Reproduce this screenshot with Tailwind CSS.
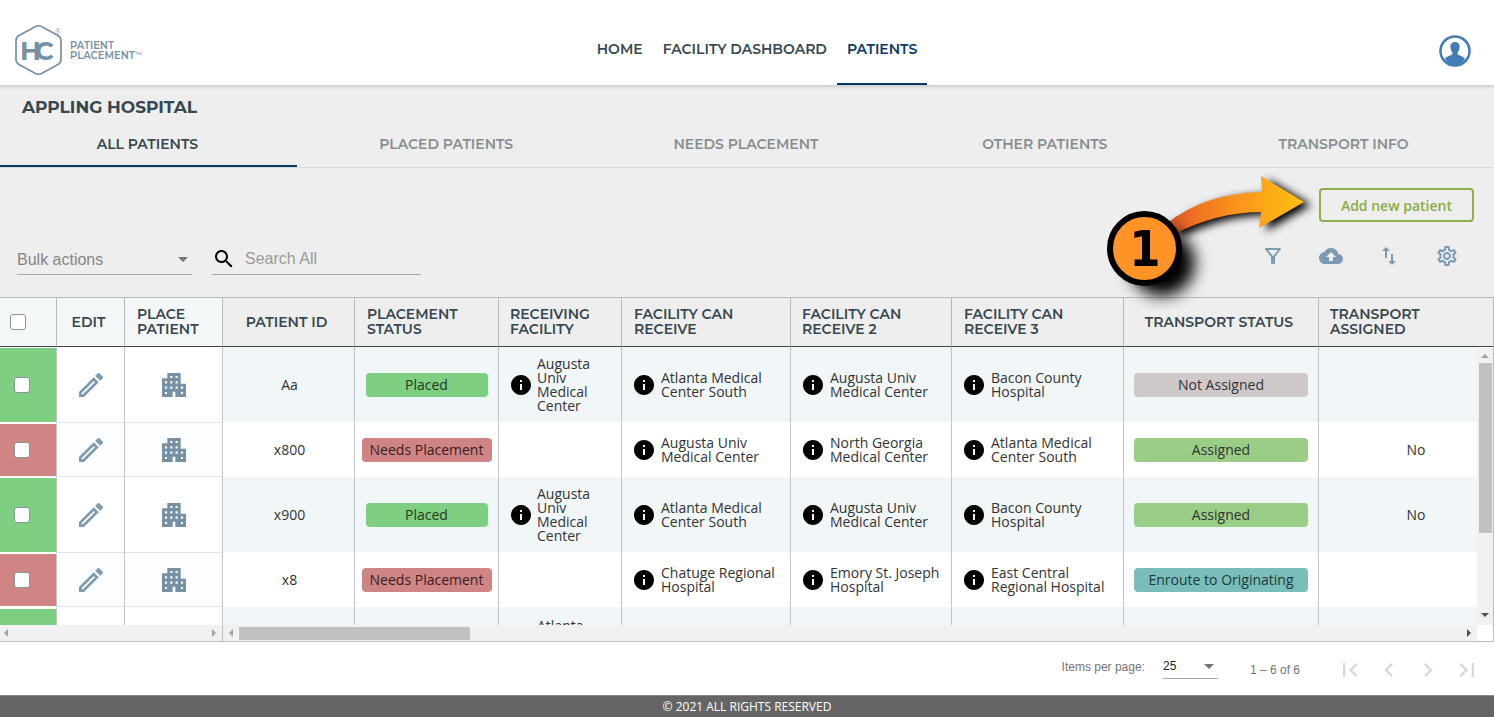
<!DOCTYPE html>
<html lang="en">
<head>
<meta charset="utf-8">
<meta name="viewport" content="width=device-width, initial-scale=1">
<title>Patient Placement</title>
<script src="https://cdn.jsdelivr.net/npm/@tailwindcss/browser@4"></script>
</head>
<body class="flex h-screen flex-col overflow-hidden bg-white font-['Open_Sans',sans-serif] text-sm text-[#333]">
<svg class="hidden" aria-hidden="true">
  <symbol id="pencil" viewBox="3 3 18 18"><path d="M14.06,9L15,9.94L5.92,19H5V18.08L14.06,9M17.66,3C17.41,3 17.15,3.1 16.96,3.29L15.13,5.12L18.88,8.87L20.71,7.04C21.1,6.65 21.1,6 20.71,5.63L18.37,3.29C18.17,3.09 17.92,3 17.66,3M14.06,6.19L3,17.25V21H6.75L17.81,9.94L14.06,6.19Z"/></symbol>
  <symbol id="building" viewBox="3 3 18 18"><path d="M17 11V3H7v4H3v14h8v-4h2v4h8V11h-4zM6.800 18.800H5.200v-1.600h1.600v1.600zm0-4H5.200v-1.600h1.600v1.600zm0-4H5.200V9.200h1.600v1.600zm4 4H9.200v-1.600h1.600v1.600zm0-4H9.200V9.200h1.600v1.600zm0-4H9.200V5.200h1.600v1.600zm4 8h-1.600v-1.600h1.600v1.600zm0-4h-1.600V9.200h1.600v1.600zm0-4h-1.600V5.200h1.600v1.600zm4 12h-1.600v-1.600h1.600v1.600zm0-4h-1.600v-1.600h1.600v1.600z"/></symbol>
  <symbol id="info" viewBox="2 2 20 20"><path d="M12 2C6.480 2 2 6.480 2 12s4.480 10 10 10 10-4.480 10-10S17.520 2 12 2zm1 15h-2v-6h2v6zm0-8h-2V7h2v2z"/></symbol>
</svg>

<header class="relative z-10 grid h-[85px] shrink-0 grid-cols-[1fr_auto_1fr] bg-white shadow-[0_1px_4px_rgba(0,0,0,0.22)]">
  <a href="#" aria-label="HC Patient Placement" class="flex items-start pt-5 pl-3">
    <svg width="140" height="60" viewBox="12 20 140 60" fill="#7690a5" font-family="Montserrat, Inter, sans-serif">
      <path d="M35.500 26.500Q38.500 25 41.500 26.500L58 35.500Q61 37.200 61 40.500V59.500Q61 62.800 58 64.500L41.500 73.500Q38.500 75 35.500 73.500L19 64.500Q16 62.800 16 59.500V40.500Q16 37.200 19 35.500Z" fill="none" stroke="#7690a5" stroke-width="1.700"/>
      <text x="20" y="60" font-size="26" font-weight="700">H</text>
      <text x="35" y="60" font-size="26" font-weight="700">C</text>
      <text x="55" y="34" font-size="7">®</text>
      <text x="70" y="49" font-size="10" font-weight="600">PATIENT</text>
      <text x="70" y="59" font-size="10" font-weight="600">PLACEMENT</text>
      <text x="135" y="57" font-size="7">™</text>
    </svg>
  </a>
  <nav class="ml-5 flex font-['Montserrat','Inter',sans-serif] text-sm font-semibold text-[#37474f]">
    <a href="#" class="flex items-center border-b-2 border-transparent px-[10px] pt-4 pb-px">HOME</a>
    <a href="#" class="flex items-center border-b-2 border-transparent px-[10px] pt-4 pb-px">FACILITY DASHBOARD</a>
    <a href="#" aria-current="page" class="flex items-center border-b-2 border-[#083865] px-[10px] pt-4 pb-px text-[#083865]">PATIENTS</a>
  </nav>
  <div class="flex items-start justify-end pt-[35px] pr-[23px]">
    <button aria-label="Account">
      <svg width="32" height="32" viewBox="0 0 32 32"><circle cx="16" cy="16" r="14.500" fill="#fff" stroke="#427cb6" stroke-width="2.500"/><path d="M16 7c3.200 0 4.800 2.200 4.600 5-.1 2.400-1 4.400-2 5.400v1.800c1.400 1.400 5.400 1.800 7.400 4.200C24 27.500 20 30 16 30S8 27.500 6 23.400c2-2.400 6-2.800 7.400-4.200v-1.800c-1-1-1.900-3-2-5.400C11.200 9.200 12.800 7 16 7Z" fill="#427cb6"/></svg>
    </button>
  </div>
</header>

<main class="flex min-h-0 flex-1 flex-col">
  <section class="shrink-0 bg-[#eee] pt-[10px] font-['Montserrat','Inter',sans-serif]">
    <h1 class="pl-[22px] text-[17px] leading-6 font-bold text-[#37474f]">APPLING HOSPITAL</h1>
    <div role="tablist" class="grid h-[49px] grid-cols-5 border-b border-[#dcdcdc] text-sm font-semibold text-[#868e93]">
      <button role="tab" aria-selected="true" class="mr-[2px] border-b-2 border-[#083865] pt-1 pr-[2px] text-[#37474f]">ALL PATIENTS</button>
      <button role="tab" aria-selected="false" class="border-b-2 border-transparent pt-1 pr-1">PLACED PATIENTS</button>
      <button role="tab" aria-selected="false" class="border-b-2 border-transparent pt-1 pr-[2px]">NEEDS PLACEMENT</button>
      <button role="tab" aria-selected="false" class="border-b-2 border-transparent pt-1 pr-[2px]">OTHER PATIENTS</button>
      <button role="tab" aria-selected="false" class="border-b-2 border-transparent pt-1 pr-[2px]">TRANSPORT INFO</button>
    </div>
  </section>

  <section class="relative flex h-[129px] shrink-0 flex-col bg-[#eee] pt-5">
    <div class="flex justify-end pr-5">
      <button class="h-[34px] rounded border-2 border-[#8cb04e] px-5 pt-px text-sm font-semibold text-[#87ad46]">Add new patient</button>
    </div>
    <div class="flex items-start justify-between pt-[22px] pr-[35px] pl-[17px] font-['Liberation_Sans',Arial,sans-serif] text-base">
      <div class="flex gap-5">
        <div class="grid w-[175px] items-center border-b border-[#a8a8a8]">
          <select aria-label="Bulk actions" class="col-start-1 row-start-1 h-[30px] w-full appearance-none bg-transparent pt-[2px] text-[#858585] outline-none"><option>Bulk actions</option></select>
          <svg class="pointer-events-none col-start-1 row-start-1 mr-1 justify-self-end" width="10" height="5"><path d="M0 0h10L5 5z" fill="#757575"/></svg>
        </div>
        <label class="flex h-[31px] w-[209px] items-center gap-[9px] border-b border-[#a8a8a8]">
          <svg class="shrink-0" width="24" height="24" viewBox="0 0 24 24"><path d="M15.500 14h-.79l-.28-.27C15.410 12.590 16 11.110 16 9.500 16 5.910 13.090 3 9.500 3S3 5.910 3 9.500 5.910 16 9.500 16c1.610 0 3.090-.59 4.230-1.570l.27.28v.79l5 4.990L20.490 19l-4.990-5zm-6 0C7.010 14 5 11.990 5 9.500S7.010 5 9.500 5 14 7.010 14 9.500 11.990 14 9.500 14z"/></svg>
          <input type="search" placeholder="Search All" aria-label="Search All" class="w-full min-w-0 bg-transparent outline-none placeholder:text-[#9b9b9b]">
        </label>
      </div>
      <div class="flex gap-[34px] fill-[#7c9ab0]">
        <button aria-label="Filter"><svg width="24" height="24" viewBox="0 0 24 24"><path d="M7 6h10l-5.010 6.300L7 6zm-2.750-.39C6.270 8.200 10 13 10 13v6c0 .55.45 1 1 1h2c.55 0 1-.45 1-1v-6s3.720-4.800 5.740-7.390A.998.998 0 0018.950 4H5.040c-.83 0-1.300.95-.79 1.610z"/></svg></button>
        <button aria-label="Upload"><svg width="24" height="24" viewBox="0 0 24 24"><path d="M19.350 10.040C18.670 6.590 15.640 4 12 4 9.110 4 6.600 5.640 5.350 8.040 2.340 8.360 0 10.910 0 14c0 3.310 2.690 6 6 6h13c2.760 0 5-2.240 5-5 0-2.640-2.050-4.780-4.650-4.960zM14 13v4h-4v-4H7l5-5 5 5h-3z"/></svg></button>
        <button aria-label="Sort"><svg width="24" height="24" viewBox="0 0 24 24"><path d="M9 3L5 6.990h3V14h2V6.990h3L9 3zm7 14.010V10h-2v7.010h-3L15 21l4-3.990h-3z"/></svg></button>
        <button aria-label="Settings"><svg width="24" height="24" viewBox="0 0 24 24"><path d="M19.43 12.98c.04-.32.07-.64.07-.98 0-.34-.03-.66-.07-.98l2.11-1.65c.19-.15.24-.42.12-.64l-2-3.46c-.09-.16-.26-.25-.44-.25-.06 0-.12.01-.17.03l-2.49 1c-.52-.4-1.08-.73-1.69-.98l-.38-2.65C14.46 2.18 14.25 2 14 2h-4c-.25 0-.46.18-.49.42l-.38 2.65c-.61.25-1.17.59-1.69.98l-2.49-1c-.06-.02-.12-.03-.18-.03-.17 0-.34.09-.43.25l-2 3.46c-.13.22-.07.49.12.64l2.11 1.65c-.04.32-.07.65-.07.98 0 .33.03.66.07.98l-2.11 1.65c-.19.15-.24.42-.12.64l2 3.46c.09.16.26.25.44.25.06 0 .12-.01.17-.03l2.49-1c.52.4 1.08.73 1.69.98l.38 2.65c.03.24.24.42.49.42h4c.25 0 .46-.18.49-.42l.38-2.65c.61-.25 1.17-.59 1.69-.98l2.49 1c.06.02.12.03.18.03.17 0 .34-.09.43-.25l2-3.46c.12-.22.07-.49-.12-.64l-2.110-1.650zm-1.980-1.710c.04.31.05.52.05.73 0 .21-.02.43-.05.73l-.14 1.130.89.7 1.080.84-.7 1.210-1.270-.51-1.040-.42-.9.68c-.43.32-.84.56-1.250.73l-1.060.43-.16 1.130-.2 1.350h-1.400l-.19-1.350-.16-1.130-1.060-.43c-.43-.18-.83-.41-1.230-.71l-.91-.7-1.060.43-1.270.51-.7-1.210 1.080-.84.89-.7-.14-1.130c-.03-.31-.05-.54-.05-.74s.02-.43.05-.73l.14-1.130-.89-.7-1.080-.84.7-1.210 1.270.51 1.040.42.9-.68c.43-.32.84-.56 1.250-.73l1.060-.43.16-1.130.2-1.350h1.390l.19 1.350.16 1.130 1.060.43c.43.18.83.41 1.230.71l.91.7 1.060-.43 1.270-.51.7 1.210-1.070.85-.89.7.14 1.130zM12 8c-2.210 0-4 1.790-4 4s1.790 4 4 4 4-1.790 4-4-1.790-4-4-4zm0 6c-1.100 0-2-.9-2-2s.9-2 2-2 2 .9 2 2-.9 2-2 2z"/></svg></button>
      </div>
    </div>

    <!-- Step 1 callout pointing at the button -->
    <svg class="pointer-events-none absolute top-0 right-[164px] z-20" width="230" height="142" viewBox="1100 168 230 142">
      <defs>
        <linearGradient id="flame" x1="1170" x2="1304" y1="0" y2="0" gradientUnits="userSpaceOnUse"><stop offset="0" stop-color="#d9532a"/><stop offset=".2" stop-color="#f0731f"/><stop offset=".5" stop-color="#fa941b"/><stop offset="1" stop-color="#ffc010"/></linearGradient>
        <filter id="soft" x="-50%" y="-50%" width="200%" height="200%"><feGaussianBlur stdDeviation="8"/></filter>
        <filter id="near" x="-20%" y="-40%" width="140%" height="180%"><feGaussianBlur stdDeviation="4"/></filter>
      </defs>
      <path transform="translate(7 3)" d="M1166 224Q1205 192 1262 192L1261 176L1304 202L1259 228L1261 212Q1218 212 1174 234Z" fill="#000" filter="url(#near)"/>
      <path d="M1166 224Q1205 193 1262 192L1261 176L1304 202L1259 228L1261 212Q1218 212 1174 234Z" fill="url(#flame)"/>
      <circle cx="1162" cy="263" r="33" filter="url(#soft)"/>
      <circle cx="1144.500" cy="248.500" r="34.500" fill="#ff9326" stroke="#000" stroke-width="6"/>
      <text x="1145" y="266" text-anchor="middle" font-family="DejaVu Sans Condensed, DejaVu Sans, sans-serif" font-weight="700" font-size="50">1</text>
    </svg>
  </section>

  <section class="flex min-h-0 flex-1 flex-col border-t border-r border-b border-[#b4bec2]">
    <div class="relative min-h-0 flex-1 overflow-hidden">
      <table class="w-full table-fixed border-separate border-spacing-0 text-sm leading-[14px]">
        <colgroup><col class="w-[57px]"><col class="w-[68px]"><col class="w-[98px]"><col class="w-[132px]"><col class="w-[144px]"><col class="w-[123px]"><col class="w-[169px]"><col class="w-[161px]"><col class="w-[172px]"><col class="w-[195px]"><col></colgroup>
        <thead class="bg-[#eee] font-['Montserrat','Inter',sans-serif] text-sm leading-[15px] text-[#37474f]">
          <tr class="h-[49px] text-left *:border-r *:border-b *:border-r-[#b5b9bb] *:border-b-[#444] *:py-0 *:font-semibold">
            <th class="bg-[#f4f7f7] pl-[10px]"><input type="checkbox" aria-label="Select all" class="block size-4 appearance-none rounded-[3px] border border-[#8a9499] bg-white"></th>
            <th class="bg-[#f4f7f7] pr-1 text-center">EDIT</th>
            <th class="bg-[#f4f7f7] pl-3">PLACE PATIENT</th>
            <th class="pr-1 text-center">PATIENT ID</th>
            <th class="pl-3">PLACEMENT STATUS</th>
            <th class="pl-[11px]">RECEIVING FACILITY</th>
            <th class="pr-6 pl-3">FACILITY CAN RECEIVE</th>
            <th class="pr-6 pl-[11px]">FACILITY CAN RECEIVE 2</th>
            <th class="pr-6 pl-3">FACILITY CAN RECEIVE 3</th>
            <th class="pr-1 text-center">TRANSPORT STATUS</th>
            <th class="border-r-0! pr-12 pl-[11px]">TRANSPORT ASSIGNED</th>
          </tr>
        </thead>
        <tbody>
          <tr class="h-[76px] bg-[#f1f7f8] *:border-r *:border-b *:border-r-[#bfc4c6] *:border-b-white *:py-0">
            <td class="border-t border-t-white bg-[#7fcf82] pl-[14px]"><input type="checkbox" aria-label="Select Aa" class="block size-4 appearance-none rounded-[3px] border border-[#8a9499] bg-white"></td>
            <td class="border-b-[#dfe3e5]! bg-white"><button aria-label="Edit Aa" class="mx-auto block fill-[#7c9ab0]"><svg width="24" height="24"><use href="#pencil"/></svg></button></td>
            <td class="border-b-[#dfe3e5]! bg-white"><button aria-label="Place Aa" class="mx-auto block fill-[#7690a5]"><svg width="24" height="24"><use href="#building"/></svg></button></td>
            <td class="pl-[2px] text-center">Aa</td>
            <td><div class="mx-auto flex h-6 w-[122px] items-center justify-center rounded bg-[#7fcf82] text-[#1d3a20]">Placed</div></td>
            <td class="pr-7 pl-3"><div class="flex items-center gap-[6px]"><svg class="shrink-0" width="20" height="20"><use href="#info"/></svg><span>Augusta Univ Medical Center</span></div></td>
            <td class="pl-3"><div class="flex items-center gap-[7px]"><svg class="shrink-0" width="20" height="20"><use href="#info"/></svg><span>Atlanta Medical Center South</span></div></td>
            <td class="pl-3"><div class="flex items-center gap-[7px]"><svg class="shrink-0" width="20" height="20"><use href="#info"/></svg><span>Augusta Univ Medical Center</span></div></td>
            <td class="pl-3"><div class="flex items-center gap-[7px]"><svg class="shrink-0" width="20" height="20"><use href="#info"/></svg><span>Bacon County Hospital</span></div></td>
            <td class="px-[10px]"><div class="flex h-6 items-center justify-center rounded bg-[#d0c9ca]">Not Assigned</div></td>
            <td class="border-r-0!"></td>
          </tr>
          <tr class="h-[54px] bg-white *:border-r *:border-b *:border-r-[#bfc4c6] *:border-b-white *:py-0">
            <td class="border-t border-t-white bg-[#ce8583] pl-[14px]"><input type="checkbox" aria-label="Select x800" class="block size-4 appearance-none rounded-[3px] border border-[#8a9499] bg-white"></td>
            <td class="border-b-[#dfe3e5]! bg-[#fbfdfe]"><button aria-label="Edit x800" class="mx-auto block fill-[#7c9ab0]"><svg width="24" height="24"><use href="#pencil"/></svg></button></td>
            <td class="border-b-[#dfe3e5]! bg-[#fbfdfe]"><button aria-label="Place x800" class="mx-auto block fill-[#7690a5]"><svg width="24" height="24"><use href="#building"/></svg></button></td>
            <td class="pl-[2px] text-center">x800</td>
            <td><div class="mx-auto flex h-6 w-[130px] items-center justify-center rounded bg-[#ce8583] text-[#3a1d1d]">Needs Placement</div></td>
            <td></td>
            <td class="pl-3"><div class="flex items-center gap-[7px]"><svg class="shrink-0" width="20" height="20"><use href="#info"/></svg><span>Augusta Univ Medical Center</span></div></td>
            <td class="pl-3"><div class="flex items-center gap-[7px]"><svg class="shrink-0" width="20" height="20"><use href="#info"/></svg><span>North Georgia Medical Center</span></div></td>
            <td class="pl-3"><div class="flex items-center gap-[7px]"><svg class="shrink-0" width="20" height="20"><use href="#info"/></svg><span>Atlanta Medical Center South</span></div></td>
            <td class="px-[10px]"><div class="flex h-6 items-center justify-center rounded bg-[#9acd86]">Assigned</div></td>
            <td class="border-r-0! pl-5 text-center">No</td>
          </tr>
          <tr class="h-[76px] bg-[#f1f7f8] *:border-r *:border-b *:border-r-[#bfc4c6] *:border-b-white *:py-0">
            <td class="border-t border-t-white bg-[#7fcf82] pl-[14px]"><input type="checkbox" aria-label="Select x900" class="block size-4 appearance-none rounded-[3px] border border-[#8a9499] bg-white"></td>
            <td class="border-b-[#dfe3e5]! bg-white"><button aria-label="Edit x900" class="mx-auto block fill-[#7c9ab0]"><svg width="24" height="24"><use href="#pencil"/></svg></button></td>
            <td class="border-b-[#dfe3e5]! bg-white"><button aria-label="Place x900" class="mx-auto block fill-[#7690a5]"><svg width="24" height="24"><use href="#building"/></svg></button></td>
            <td class="pl-[2px] text-center">x900</td>
            <td><div class="mx-auto flex h-6 w-[122px] items-center justify-center rounded bg-[#7fcf82] text-[#1d3a20]">Placed</div></td>
            <td class="pr-7 pl-3"><div class="flex items-center gap-[6px]"><svg class="shrink-0" width="20" height="20"><use href="#info"/></svg><span>Augusta Univ Medical Center</span></div></td>
            <td class="pl-3"><div class="flex items-center gap-[7px]"><svg class="shrink-0" width="20" height="20"><use href="#info"/></svg><span>Atlanta Medical Center South</span></div></td>
            <td class="pl-3"><div class="flex items-center gap-[7px]"><svg class="shrink-0" width="20" height="20"><use href="#info"/></svg><span>Augusta Univ Medical Center</span></div></td>
            <td class="pl-3"><div class="flex items-center gap-[7px]"><svg class="shrink-0" width="20" height="20"><use href="#info"/></svg><span>Bacon County Hospital</span></div></td>
            <td class="px-[10px]"><div class="flex h-6 items-center justify-center rounded bg-[#9acd86]">Assigned</div></td>
            <td class="border-r-0! pl-5 text-center">No</td>
          </tr>
          <tr class="h-[54px] bg-white *:border-r *:border-b *:border-r-[#bfc4c6] *:border-b-white *:py-0">
            <td class="border-t border-t-white bg-[#ce8583] pl-[14px]"><input type="checkbox" aria-label="Select x8" class="block size-4 appearance-none rounded-[3px] border border-[#8a9499] bg-white"></td>
            <td class="border-b-[#dfe3e5]! bg-[#fbfdfe]"><button aria-label="Edit x8" class="mx-auto block fill-[#7c9ab0]"><svg width="24" height="24"><use href="#pencil"/></svg></button></td>
            <td class="border-b-[#dfe3e5]! bg-[#fbfdfe]"><button aria-label="Place x8" class="mx-auto block fill-[#7690a5]"><svg width="24" height="24"><use href="#building"/></svg></button></td>
            <td class="pl-[2px] text-center">x8</td>
            <td><div class="mx-auto flex h-6 w-[130px] items-center justify-center rounded bg-[#ce8583] text-[#3a1d1d]">Needs Placement</div></td>
            <td></td>
            <td class="pl-3"><div class="flex items-center gap-[7px]"><svg class="shrink-0" width="20" height="20"><use href="#info"/></svg><span>Chatuge Regional Hospital</span></div></td>
            <td class="pl-3"><div class="flex items-center gap-[7px]"><svg class="shrink-0" width="20" height="20"><use href="#info"/></svg><span>Emory St. Joseph Hospital</span></div></td>
            <td class="pl-3"><div class="flex items-center gap-[7px]"><svg class="shrink-0" width="20" height="20"><use href="#info"/></svg><span>East Central Regional Hospital</span></div></td>
            <td class="px-[10px]"><div class="flex h-6 items-center justify-center rounded bg-[#79beb8] text-[#1c3a38]">Enroute to Originating</div></td>
            <td class="border-r-0!"></td>
          </tr>
          <tr class="h-[76px] bg-[#f1f7f8] *:border-r *:border-r-[#bfc4c6] *:py-0">
            <td class="border-t-2 border-t-white bg-[#7fcf82]"></td>
            <td class="bg-white"></td>
            <td class="bg-white"></td>
            <td></td>
            <td></td>
            <td class="pt-3! pl-[38px] align-top">Atlanta</td>
            <td></td>
            <td></td>
            <td></td>
            <td></td>
            <td class="border-r-0!"></td>
          </tr>
        </tbody>
      </table>
      <!-- vertical scrollbar over the body rows -->
      <div class="absolute top-[50px] right-0 bottom-0 flex w-4 flex-col items-center justify-between bg-[#f1f1f1] pt-[6px] pb-2">
        <svg width="8" height="4" class="shrink-0"><path d="M4 0l4 4H0z" fill="#a3a3a3"/></svg>
        <div class="mt-[5px] mb-auto h-[170px] w-[13px] bg-[#c1c1c1]"></div>
        <svg width="8" height="4" class="shrink-0"><path d="M0 0h8L4 4z" fill="#505050"/></svg>
      </div>
    </div>
    <div class="flex h-4 shrink-0 pr-4">
      <div class="flex w-[223px] shrink-0 items-center justify-between border-r border-[#bfc4c6] bg-[#f1f1f1] pr-[6px] pl-1">
        <svg width="4" height="8"><path d="M4 0v8L0 4z" fill="#a3a3a3"/></svg>
        <svg width="4" height="8"><path d="M0 0v8l4-4z" fill="#a3a3a3"/></svg>
      </div>
      <div class="flex flex-1 items-center bg-[#f1f1f1] pr-[6px] pl-[6px]">
        <svg width="4" height="8"><path d="M4 0v8L0 4z" fill="#a3a3a3"/></svg>
        <div class="mr-auto ml-[6px] h-[13px] w-[231px] bg-[#c1c1c1]"></div>
        <svg width="4" height="8"><path d="M0 0v8l4-4z" fill="#505050"/></svg>
      </div>
    </div>
  </section>

  <div class="flex h-[53px] shrink-0 items-start justify-end pr-[13px] font-['Liberation_Sans',Arial,sans-serif] text-xs text-[#757575]">
    <label for="size" class="mr-[18px] pt-[17px]">Items per page:</label>
    <div class="mt-3 mr-8 grid w-[55px] items-center border-b border-[#a8a8a8]">
      <select id="size" class="col-start-1 row-start-1 h-6 w-full appearance-none bg-transparent text-[#222] outline-none"><option>25</option></select>
      <svg class="pointer-events-none col-start-1 row-start-1 mr-1 justify-self-end" width="10" height="5"><path d="M0 0h10L5 5z" fill="#757575"/></svg>
    </div>
    <span class="mr-9 pt-5">1 – 6 of 6</span>
    <div class="flex gap-[11px] fill-[#d9d9d9] pt-[14px]">
      <button aria-label="First page"><svg width="28" height="28" viewBox="0 0 24 24"><path d="M18.410 16.590L13.820 12l4.590-4.590L17 6l-6 6 6 6zM6 6h2v12H6z"/></svg></button>
      <button aria-label="Previous page"><svg width="28" height="28" viewBox="0 0 24 24"><path d="M15.410 7.410L14 6l-6 6 6 6 1.410-1.410L10.830 12z"/></svg></button>
      <button aria-label="Next page"><svg width="28" height="28" viewBox="0 0 24 24"><path d="M10 6L8.590 7.410 13.170 12l-4.580 4.590L10 18l6-6z"/></svg></button>
      <button aria-label="Last page"><svg width="28" height="28" viewBox="0 0 24 24"><path d="M5.590 7.410L10.180 12l-4.590 4.590L7 18l6-6-6-6zM16 6h2v12h-2z"/></svg></button>
    </div>
  </div>
</main>

<footer class="flex h-[22px] shrink-0 items-center justify-center border-t border-[#8a8a8a] bg-[#656565] pt-px text-xs text-white">© 2021 ALL RIGHTS RESERVED</footer>
</body>
</html>
